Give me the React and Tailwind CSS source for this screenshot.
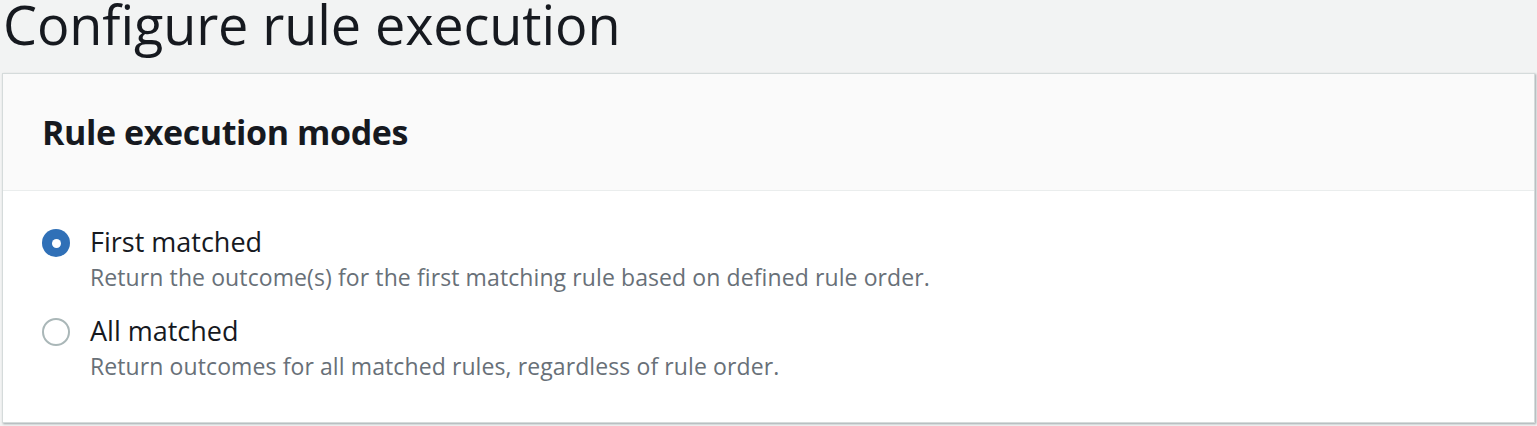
import React, { useState } from 'react';

const options = [
    { id: 'first', label: 'First matched', desc: 'Return the outcome(s) for the first matching rule based on defined rule order.' },
    { id: 'all', label: 'All matched', desc: 'Return outcomes for all matched rules, regardless of rule order.' },
];

const App = () => {
    const [mode, setMode] = useState('first');

    return (
        <div className="w-[1537px] h-[426px] bg-[#f2f3f3] overflow-hidden" style={{ fontFamily: '"Open Sans", "Liberation Sans", sans-serif' }}>
            <div className="h-[73px] pl-[3px] pt-[2px]">
                <h1 className="text-[54px] leading-[44px] text-[#16191f] tracking-[-0.1px] whitespace-nowrap">Configure rule execution</h1>
            </div>
            <div className="ml-[2px] mr-[2px] bg-white border border-[#d5dbdb] shadow-[1px_1px_2px_rgba(0,28,36,0.35)]">
                <div className="h-[117px] bg-[#fafafa] border-b border-[#eaeded] flex items-center px-[39px]">
                    <h2 className="text-[34px] leading-[40px] font-bold text-[#16191f] tracking-[-0.4px]">Rule execution modes</h2>
                </div>
                <div className="px-[39px] pt-[35px] pb-[41px] flex flex-col gap-[23px]">
                    {options.map(o => (
                        <label key={o.id} className="flex items-start gap-[20px] cursor-pointer" onClick={() => setMode(o.id)}>
                            <span className={`mt-[3px] w-[28px] h-[28px] rounded-full flex items-center justify-center shrink-0 ${mode === o.id ? 'bg-[#3070b7]' : 'border-2 border-[#aab7b8] bg-white'}`}>
                                {mode === o.id && <span className="w-[9px] h-[9px] rounded-full bg-white" />}
                            </span>
                            <span className="flex flex-col">
                                <span className="text-[27px] leading-[32px] text-[#16191f]">{o.label}</span>
                                <span className="mt-[4px] text-[23px] leading-[30px] text-[#687078] tracking-[0.1px]">{o.desc}</span>
                            </span>
                        </label>
                    ))}
                </div>
            </div>
        </div>
    );
};

export default App;
